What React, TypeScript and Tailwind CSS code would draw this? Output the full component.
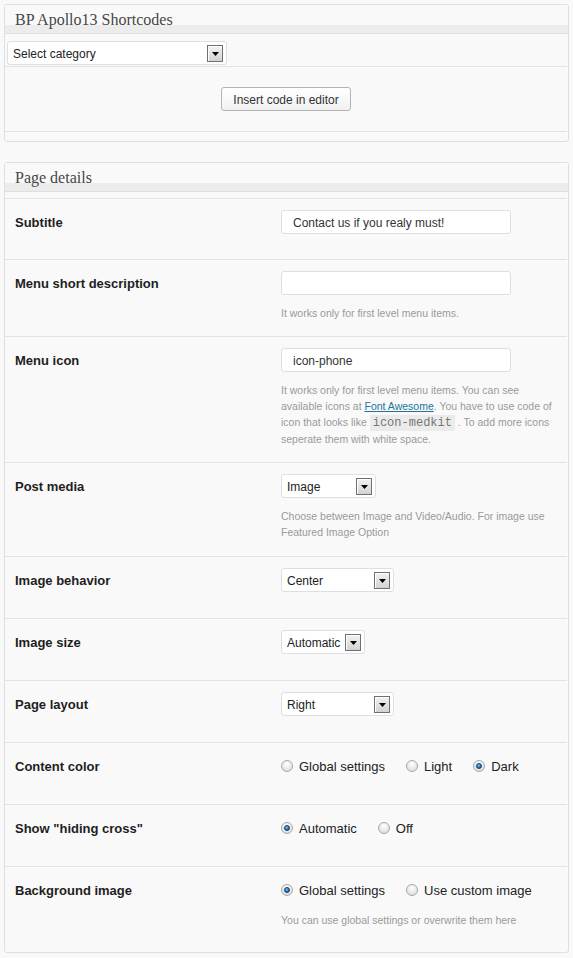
import React from "react";

const Header = ({ title }: { title: string }) => (
  <div className="h-[29px] border-b border-[#dfdfdf] bg-[linear-gradient(to_bottom,#f9f9f9_20px,#ececec_20px)] pl-[10px] pt-[7px]">
    <div className="font-['Liberation_Serif',serif] text-[16px] leading-[16px] text-[#464646]">{title}</div>
  </div>
);

const Arrow = () => (
  <span className="flex h-[17px] w-[16px] shrink-0 items-center justify-center border border-[#707070] bg-[linear-gradient(to_bottom,#f2f2f2,#d2d2d2)] shadow-[inset_1px_1px_0_#ffffff]">
    <svg width="7" height="4" viewBox="0 0 7 4" className="mt-[2px]">
      <path d="M0 0H7L3.5 4Z" fill="#000" />
    </svg>
  </span>
);

const SelectBox = ({ value, className }: { value: string; className: string }) => (
  <div
    className={
      "flex h-[24px] items-center rounded-[3px] border border-[#dfdfdf] bg-white pl-[5px] pr-[3px] text-[12px] text-[#222] " +
      className
    }
  >
    <span className="flex-1 translate-y-[1px] whitespace-nowrap">{value}</span>
    <Arrow />
  </div>
);

const Radio = ({ checked }: { checked?: boolean }) => (
  <span className="flex h-[12px] w-[12px] shrink-0 items-center justify-center rounded-full border border-[#a8a8a8] bg-[radial-gradient(circle_at_50%_30%,#ffffff,#d6d6d6)]">
    {checked && (
      <span className="h-[6px] w-[6px] rounded-full border border-[#0c3d6a] bg-[radial-gradient(circle_at_40%_35%,#7cc8ff,#1466aa_70%)]" />
    )}
  </span>
);

const RadioGroup = ({ options, checked }: { options: string[]; checked: number }) => (
  <div className="flex h-[24px] items-center">
    {options.map((o, i) => (
      <label key={o} className="mr-[21px] flex items-center gap-[6px] text-[13px] text-[#222]">
        <Radio checked={i === checked} />
        <span className="translate-y-[1px] whitespace-nowrap">{o}</span>
      </label>
    ))}
  </div>
);

const Input = ({ value }: { value: string }) => (
  <div className="h-[24px] w-[230px] rounded-[3px] border border-[#dfdfdf] bg-white pl-[11px] text-[12px] leading-[23px] text-[#333]">
    <span className="inline-block translate-y-[1px]">{value}</span>
  </div>
);

const Help = ({ children }: { children: React.ReactNode }) => (
  <div className="mt-[10px] whitespace-nowrap text-[10.5px] leading-[16px] text-[#9a9a9a]">{children}</div>
);

const Row = ({
  label,
  children,
  pb,
  last,
}: {
  label: string;
  children: React.ReactNode;
  pb: string;
  last?: boolean;
}) => (
  <div className={"mr-[1px] flex pt-[11px] " + pb + (last ? "" : " border-b border-[#e3e3e3]")}>
    <div className="h-[24px] w-[276px] shrink-0 translate-y-[1px] pl-[10px] text-[13px] font-bold leading-[24px] text-[#1e1e1e]">
      {label}
    </div>
    <div className="flex-1">{children}</div>
  </div>
);

export default function App() {
  return (
    <div className="min-h-screen bg-[#f9f9f9] px-[4px] pt-[4px] font-['Liberation_Sans',Arial,sans-serif]">
      <div className="h-[138px] rounded-[3px] border border-[#dfdfdf] bg-[#f9f9f9]">
        <Header title="BP Apollo13 Shortcodes" />
        <div className="mr-[1px] border-b border-[#e3e3e3] pb-[1px] pt-[7px]">
          <SelectBox value="Select category" className="ml-[2px] w-[220px]" />
        </div>
        <div className="mr-[1px] flex justify-center border-b border-[#e3e3e3] py-[20px]">
          <button className="h-[24px] rounded-[3px] border border-[#b4b4b4] bg-[linear-gradient(to_bottom,#ffffff,#f1f1f1)] px-[11px] text-[12px] text-[#333]">
            <span className="inline-block translate-y-[1px]">Insert code in editor</span>
          </button>
        </div>
      </div>

      <div className="mt-[20px] rounded-[3px] border border-[#dfdfdf] bg-[#f9f9f9]">
        <Header title="Page details" />
        <div className="mr-[1px] mt-[6px] border-t border-[#e3e3e3]" />
        <Row label="Subtitle" pb="pb-[25px]">
          <Input value="Contact us if you realy must!" />
        </Row>
        <Row label="Menu short description" pb="pb-[15px]">
          <Input value="" />
          <Help>It works only for first level menu items.</Help>
        </Row>
        <Row label="Menu icon" pb="pb-[15px]">
          <Input value="icon-phone" />
          <Help>
            It works only for first level menu items. You can see
            <br />
            available icons at{" "}
            <a className="text-[#21759b] underline">Font Awesome</a>. You have to use code of
            <br />
            icon that looks like{" "}
            <code className="bg-[#ebebeb] px-[3px] py-[1px] font-['Liberation_Mono',monospace] text-[12px] text-[#777]">
              icon-medkit
            </code>{" "}
            . To add more icons
            <br />
            seperate them with white space.
          </Help>
        </Row>
        <Row label="Post media" pb="pb-[16px]">
          <SelectBox value="Image" className="w-[95px]" />
          <Help>
            Choose between Image and Video/Audio. For image use
            <br />
            Featured Image Option
          </Help>
        </Row>
        <Row label="Image behavior" pb="pb-[26px]">
          <SelectBox value="Center" className="w-[113px]" />
        </Row>
        <Row label="Image size" pb="pb-[26px]">
          <SelectBox value="Automatic" className="w-[84px]" />
        </Row>
        <Row label="Page layout" pb="pb-[26px]">
          <SelectBox value="Right" className="w-[113px]" />
        </Row>
        <Row label="Content color" pb="pb-[26px]">
          <RadioGroup options={["Global settings", "Light", "Dark"]} checked={2} />
        </Row>
        <Row label={'Show "hiding cross"'} pb="pb-[26px]">
          <RadioGroup options={["Automatic", "Off"]} checked={0} />
        </Row>
        <Row label="Background image" pb="pb-[24px]" last>
          <RadioGroup options={["Global settings", "Use custom image"]} checked={0} />
          <Help>You can use global settings or overwrite them here</Help>
        </Row>
      </div>
    </div>
  );
}
